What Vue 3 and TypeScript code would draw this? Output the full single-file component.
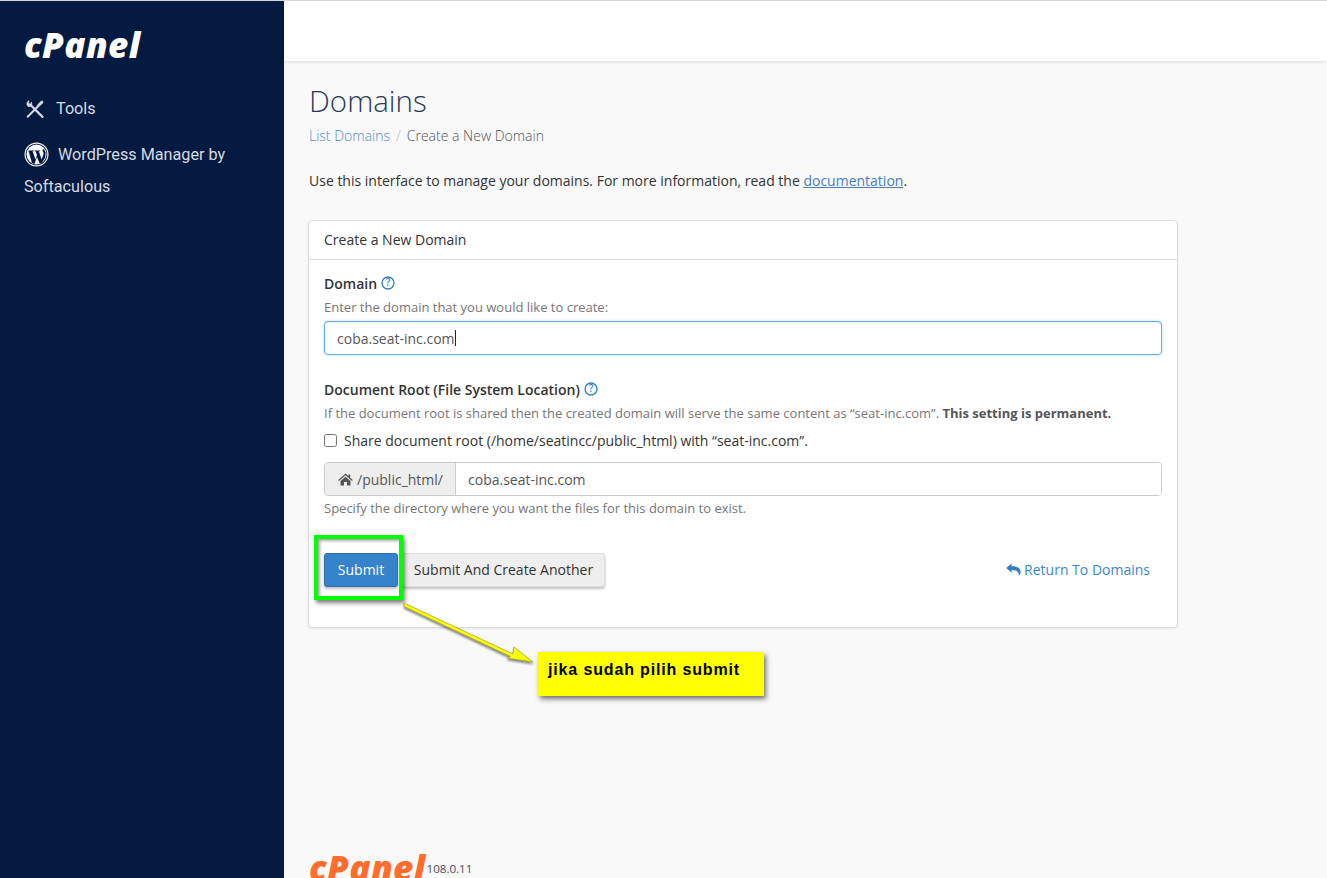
<script setup lang="ts">
const docRootHelp = "If the document root is shared then the created domain will serve the same content as “seat-inc.com”.";
</script>

<template>
  <div class="page">
    <aside class="sidebar">
      <div class="logo">cPanel</div>
      <nav class="nav">
        <a class="nav-item tools">
          <svg class="tools-icon" width="22" height="22" viewBox="0 0 24 24" fill="none" stroke="#d5dbe3" stroke-linecap="round">
            <path d="M7.2 7.6 L20.2 20.6" stroke-width="2.4" />
            <path d="M5.2 3.2 L5.2 6 L7.4 7 L8 4.4 C9 6.4 8.6 9 6.4 9.4 C4.2 9.8 2.4 7.6 3.4 4.8 Z" fill="#d5dbe3" stroke-width="0.8" stroke-linejoin="round" />
            <path d="M4 20.4 L14.6 9.8" stroke-width="2.1" />
            <path d="M14.2 8.4 L18.4 3.6 L20.4 3.4 L20.6 5.4 L15.6 9.8 Z" fill="#d5dbe3" stroke-width="0.8" stroke-linejoin="round" />
          </svg>
          <span>Tools</span>
        </a>
        <a class="nav-item wp">
          <svg class="wp-icon" width="25" height="25" viewBox="0 0 25 25">
            <circle cx="12.5" cy="12.5" r="12" fill="#f4f6f8" />
            <circle cx="12.5" cy="12.5" r="10.8" fill="#051a40" />
            <circle cx="12.5" cy="12.5" r="10" fill="#f4f6f8" />
            <path d="M4.4 8.4 H9.8 V9.2 H8.6 L11.4 17.6 L13 13.2 L11.6 9.2 H10.6 V8.4 H16 V9.2 H14.8 L17.6 17.4 L19.4 12.4 C19.9 10.8 19 9.8 18.6 8.8 C18.2 7.8 19 7 20 7.2 L21.6 10.5 L21.2 15.5 L18.2 20.6 L15.8 21.8 L12.9 15 L10.4 22 L8 21 Z" fill="#051a40" />
          </svg>
          <span class="wp-text">WordPress Manager by Softaculous</span>
        </a>
      </nav>
    </aside>

    <main class="main">
      <header class="topbar"></header>
      <div class="content">
        <h1 class="title">Domains</h1>
        <div class="crumbs">
          <a class="crumb-link">List Domains</a>
          <span class="crumb-sep">/</span>
          <span class="crumb-current">Create a New Domain</span>
        </div>
        <p class="intro">
          Use this interface to manage your domains. For more information, read the
          <a class="doc-link">documentation</a>.
        </p>

        <section class="card">
          <div class="card-head">Create a New Domain</div>
          <div class="card-body">
            <div class="label-row first">
              <label class="label">Domain</label>
              <svg class="help" width="14" height="14" viewBox="0 0 14 14">
                <circle cx="7" cy="7" r="6" fill="none" stroke="#2f7fc6" stroke-width="1.3" />
                <text x="7" y="10.3" text-anchor="middle" class="help-mark">?</text>
              </svg>
            </div>
            <div class="hint shifted">Enter the domain that you would like to create:</div>
            <div class="input focus">coba.seat-inc.com<span class="caret"></span></div>

            <div class="label-row second">
              <label class="label">Document Root (File System Location)</label>
              <svg class="help" width="14" height="14" viewBox="0 0 14 14">
                <circle cx="7" cy="7" r="6" fill="none" stroke="#2f7fc6" stroke-width="1.3" />
                <text x="7" y="10.3" text-anchor="middle" class="help-mark">?</text>
              </svg>
            </div>
            <div class="hint shifted">{{ docRootHelp }} <b>This setting is permanent.</b></div>
            <div class="check-row">
              <span class="checkbox"></span>
              <span>Share document root (/home/seatincc/public_html) with “seat-inc.com”.</span>
            </div>
            <div class="group">
              <div class="addon">
                <svg width="15" height="13" viewBox="0 0 15 13">
                  <path d="M7.5 0.6 L10.4 3.1 V1.4 H12.2 V4.7 L14.8 7 L14 7.9 L7.5 2.3 L1 7.9 L0.2 7 Z M2.5 8 L7.5 3.7 L12.5 8 V12.6 H9 V9 H6 V12.6 H2.5 Z" fill="#555" />
                </svg>
                <span>/public_html/</span>
              </div>
              <div class="group-input">coba.seat-inc.com</div>
            </div>
            <div class="hint after">Specify the directory where you want the files for this domain to exist.</div>

            <div class="actions">
              <button class="btn primary">Submit</button>
              <button class="btn plain">Submit And Create Another</button>
              <a class="back">
                <svg width="15" height="13" viewBox="0 0 15 13">
                  <path d="M0.3 5 L5.6 0.4 V3.2 C10.6 3.2 14.6 4.6 14.6 9 C14.6 10.6 13.7 12 12.7 12.7 C13.3 10.2 12.4 7 5.6 7 V9.8 Z" fill="#2f7fc6" />
                </svg>
                <span>Return To Domains</span>
              </a>
            </div>
          </div>
        </section>

        <footer class="footer">
          <span class="foot-logo">cPanel</span>
          <span class="version">108.0.11</span>
        </footer>
      </div>
    </main>

    <div class="green-box"></div>
    <svg class="arrow" width="150" height="80" viewBox="0 0 150 80">
      <defs>
        <filter id="arrow-shadow" x="-20%" y="-20%" width="140%" height="150%">
          <feDropShadow dx="0" dy="2" stdDeviation="1.2" flood-color="#000" flood-opacity="0.5" />
        </filter>
      </defs>
      <path d="M2 2 L111 53 L112 46 L131 61 L105 57 L108.5 55.5 L2 5.5 Z" fill="#ffff00" stroke="#8a8a30" stroke-width="0.6" filter="url(#arrow-shadow)" />
    </svg>
    <div class="note">jika sudah pilih submit</div>
  </div>
</template>

<style>
html, body { margin: 0; padding: 0; overflow: hidden; }
</style>

<style scoped>
.page {
  position: relative;
  display: flex;
  width: 1327px;
  height: 878px;
  overflow: hidden;
  font-family: "Open Sans", sans-serif;
  font-size: 14px;
  color: #333;
  background: #f9f9f9;
  border-top: 1px solid #d8d8d8;
  box-sizing: border-box;
}
.sidebar {
  flex: 0 0 284px;
  background: #051a40;
  padding: 0 24px;
  box-sizing: border-box;
  font-family: Roboto, sans-serif;
  color: #d5dbe3;
  font-size: 16.2px;
}
.logo {
  margin-top: 24px;
  height: 40px;
  line-height: 40px;
  font-family: "Open Sans", sans-serif;
  font-weight: 800;
  font-style: italic;
  font-size: 35px;
  letter-spacing: 0.4px;
  color: #fff;
}
.nav { margin-top: 28px; }
.nav-item { display: block; line-height: 32px; }
.tools { display: flex; align-items: center; gap: 10px; height: 32px; }
.wp { margin-top: 14px; }
.wp-icon { vertical-align: -7px; margin-right: 9px; }
.main {
  flex: 1;
  display: flex;
  flex-direction: column;
  min-width: 0;
}
.topbar {
  flex: 0 0 60px;
  background: #fff;
  box-shadow: 0 1px 3px rgba(0, 0, 0, 0.12);
}
.content {
  flex: 1;
  display: flex;
  flex-direction: column;
  padding: 0 24px;
}
.title {
  margin: 21px 0 0 1px;
  font-size: 29.5px;
  line-height: 38px;
  font-weight: 300;
  color: #293a56;
}
.crumbs {
  margin: 6px 0 0 1px;
  line-height: 20px;
  font-size: 14px;
  font-weight: 300;
  color: #555;
}
.crumb-link { color: #4f8ad0; }
.crumb-sep { margin: 0 6px; color: #bbb; }
.intro {
  margin: 25px 0 0 1px;
  line-height: 20px;
}
.doc-link { color: #4a7dbd; text-decoration: underline; }
.card {
  width: 870px;
  height: 408px;
  margin-top: 29px;
  box-sizing: border-box;
  background: #fff;
  border: 1px solid #dcdcdc;
  border-radius: 4px;
  box-shadow: 0 1px 2px rgba(0, 0, 0, 0.08);
}
.card-head {
  height: 38px;
  line-height: 37px;
  padding: 0 15px;
  border-bottom: 1px solid #dcdcdc;
}
.card-body { padding: 0 15px; }
.label-row {
  display: flex;
  align-items: center;
  gap: 4px;
  height: 20px;
}
.first { margin-top: 13px; }
.second { margin-top: 24px; }
.label { font-weight: 600; color: #333; }
.help { flex: none; }
.help-mark {
  font-family: "Open Sans", sans-serif;
  font-size: 10px;
  font-weight: 600;
  fill: #2f7fc6;
}
.hint {
  margin-top: 3px;
  line-height: 20px;
  font-size: 13px;
  color: #767676;
}
.hint.shifted { margin-top: 4px; }
.hint b { color: #555; font-weight: 700; }
.input {
  display: flex;
  align-items: center;
  height: 34px;
  margin-top: 4px;
  padding: 0 12px;
  box-sizing: border-box;
  background: #fff;
  border: 1px solid #66afe9;
  border-radius: 4px;
  color: #555;
}
.focus { box-shadow: inset 0 1px 1px rgba(0, 0, 0, 0.07), 0 0 3px rgba(102, 175, 233, 0.5); }
.caret {
  width: 1px;
  height: 16px;
  background: #222;
}
.check-row {
  display: flex;
  align-items: center;
  gap: 7px;
  height: 20px;
  margin-top: 7px;
}
.checkbox {
  width: 13px;
  height: 13px;
  box-sizing: border-box;
  border: 1px solid #767676;
  border-radius: 2.5px;
  background: #fff;
}
.group {
  display: flex;
  height: 34px;
  margin-top: 12px;
  border: 1px solid #ccc;
  border-radius: 4px;
  box-sizing: border-box;
  overflow: hidden;
  color: #555;
}
.addon {
  display: flex;
  align-items: center;
  gap: 4px;
  width: 131px;
  padding-left: 13px;
  box-sizing: border-box;
  background: #eee;
  border-right: 1px solid #ccc;
}
.group-input {
  flex: 1;
  display: flex;
  align-items: center;
  padding-left: 12px;
  background: #fff;
}
.hint.after { margin-top: 2px; }
.actions {
  display: flex;
  align-items: center;
  margin-top: 35px;
}
.btn {
  height: 34px;
  padding: 0 0 2px;
  font: inherit;
  white-space: nowrap;
  border-radius: 3px;
  box-shadow: 0 2px 3px rgba(0, 0, 0, 0.25);
}
.primary {
  width: 74px;
  color: #fff;
  background: #3583cb;
  border: 1px solid #2c6ca8;
}
.plain {
  width: 203px;
  margin-left: 4px;
  color: #333;
  background: #eee;
  border: 1px solid #ddd;
}
.back {
  display: flex;
  align-items: center;
  gap: 3px;
  margin-left: auto;
  margin-right: 12px;
  margin-bottom: 2px;
  color: #3a87cf;
}
.footer {
  display: flex;
  align-items: flex-start;
  margin-top: auto;
  padding-left: 1px;
  height: 24px;
  flex: none;
}
.foot-logo {
  font-weight: 800;
  font-style: italic;
  font-size: 35px;
  line-height: 27px;
  letter-spacing: 0.4px;
  color: #ff6c2c;
}
.version {
  margin: 7px 0 0 1px;
  font-size: 11.6px;
  line-height: 16px;
  color: #3a4a66;
}
.green-box {
  position: absolute;
  left: 314px;
  top: 534px;
  width: 89px;
  height: 65px;
  box-sizing: border-box;
  border: 4px solid #00ff00;
  box-shadow: 2px 3px 4px rgba(0, 0, 0, 0.5), inset 2px 2px 3px rgba(0, 0, 0, 0.35);
}
.arrow {
  position: absolute;
  left: 402px;
  top: 600px;
}
.note {
  position: absolute;
  left: 538px;
  top: 651px;
  width: 226px;
  height: 44px;
  padding: 8px 10px;
  box-sizing: border-box;
  background: #ffff00;
  color: #000;
  font-family: "Liberation Sans", sans-serif;
  font-size: 16px;
  font-weight: 700;
  letter-spacing: 0.85px;
  line-height: 20px;
  box-shadow: 2px 3px 5px rgba(0, 0, 0, 0.55);
}
</style>
